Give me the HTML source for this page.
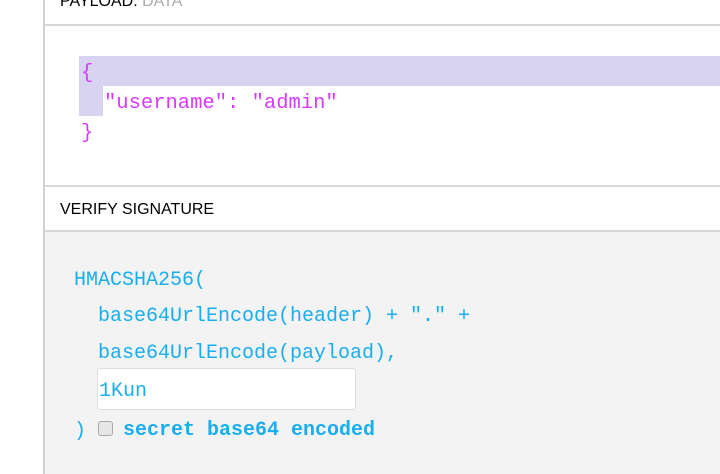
<!DOCTYPE html>
<html><head><style>
body{margin:0;width:720px;height:474px;overflow:hidden;background:#fff;position:relative;font-family:"Liberation Sans",sans-serif}
.vl{position:absolute;left:43px;top:0;width:2px;height:474px;background:#d0d0d0}
.hl{position:absolute;left:45px;right:0;height:2px;background:#d8d8d8}
.t{position:absolute;white-space:pre}
.mono{font-family:"Liberation Mono",monospace}
.p{color:#d63aff;font-size:20.5px}
.b{color:#18aef0;font-size:20px}
</style></head><body>
<div class="vl"></div>
<div class="t" style="left:60px;top:-7px;font-size:16px;color:#000">PAYLOAD: <span style="color:#aaa">DATA</span></div>
<div class="hl" style="top:24px"></div>
<div style="position:absolute;left:79px;top:56px;right:0;height:30px;background:#d8d3f0"></div>
<div style="position:absolute;left:79px;top:86px;width:24px;height:30px;background:#d8d3f0"></div>
<div class="t mono p" style="left:81px;top:62px">{</div>
<div class="t mono p" style="left:104px;top:92px">"username": "admin"</div>
<div class="t mono p" style="left:81px;top:122px">}</div>
<div class="hl" style="top:185px"></div>
<div class="t" style="left:60px;top:201px;font-size:16px;color:#000">VERIFY SIGNATURE</div>
<div class="hl" style="top:230px"></div>
<div style="position:absolute;left:45px;top:232px;right:0;bottom:0;background:#f3f3f3"></div>
<div class="t mono b" style="left:74px;top:269px">HMACSHA256(</div>
<div class="t mono b" style="left:98px;top:305px">base64UrlEncode(header) + "." +</div>
<div class="t mono b" style="left:98px;top:342px">base64UrlEncode(payload),</div>
<div style="position:absolute;left:97px;top:368px;width:257px;height:40px;background:#fff;border:1px solid #ddd;border-radius:3px"></div>
<div class="t mono b" style="left:99px;top:380px">1Kun</div>
<div class="t mono b" style="left:74px;top:420px">)</div>
<div style="position:absolute;left:98px;top:421px;width:13px;height:13px;background:#e6e6e6;border:1px solid #aaa;border-radius:3px"></div>
<div class="t mono b" style="left:123px;top:419px;font-weight:bold">secret base64 encoded</div>
</body></html>
